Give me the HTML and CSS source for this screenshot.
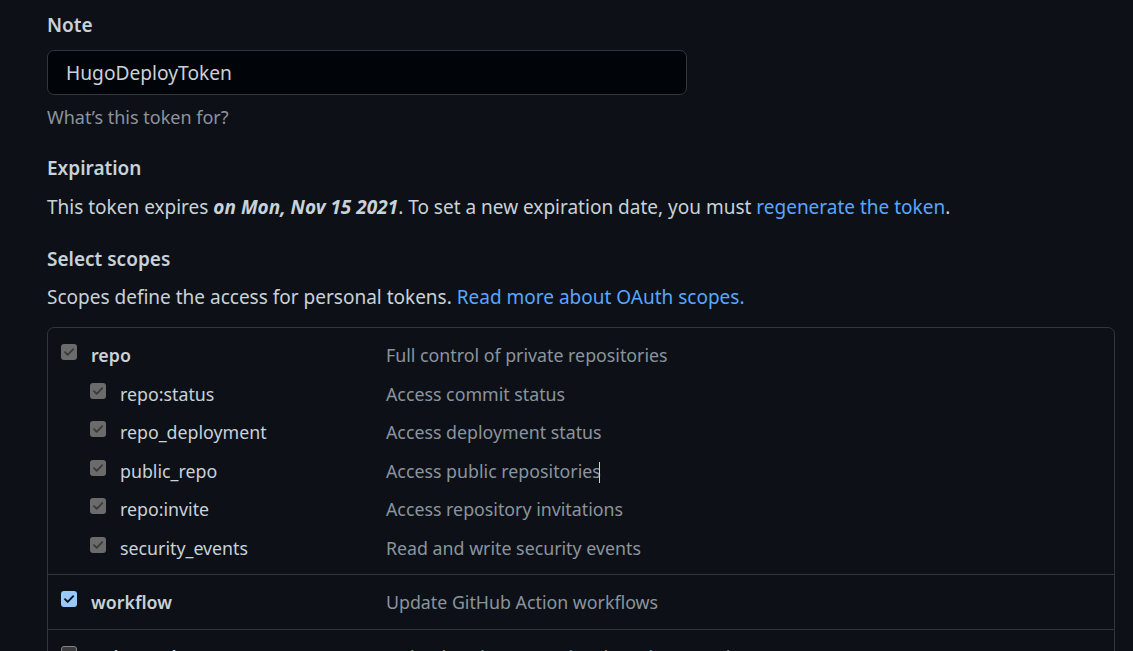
FILE: index.html
```html
<!DOCTYPE html>
<html lang="en">
<head>
<meta charset="utf-8">
<title>New personal access token</title>
<link rel="stylesheet" href="styles.css">
</head>
<body>
<div class="page">
  <div class="field">
    <label class="label" for="note">Note</label>
    <div class="input">HugoDeployToken</div>
    <p class="hint">What’s this token for?</p>
  </div>

  <div class="section expiration">
    <h3 class="label">Expiration</h3>
    <p class="text">This token expires <em class="date">on Mon, Nov 15 2021</em>. To set a new expiration date, you must <a class="link" href="#">regenerate the token</a>.</p>
  </div>

  <div class="section scopes">
    <h3 class="label">Select scopes</h3>
    <p class="text">Scopes define the access for personal tokens. <a class="link" href="#">Read more about OAuth scopes.</a></p>
  </div>

  <div class="scope-box">
    <div class="group">
      <div class="row">
        <span class="name main"><span class="cb cb-grey"><svg viewBox="0 0 16 16" width="16" height="16"><path d="M4 8.2l2.7 2.7L12.2 5.2" fill="none" stroke="#3a3a3a" stroke-width="1.8" stroke-linecap="round" stroke-linejoin="round"/></svg></span>repo</span>
        <span class="desc">Full control of private repositories</span>
      </div>
      <div class="row">
        <span class="name child"><span class="cb cb-grey"><svg viewBox="0 0 16 16" width="16" height="16"><path d="M4 8.2l2.7 2.7L12.2 5.2" fill="none" stroke="#3a3a3a" stroke-width="1.8" stroke-linecap="round" stroke-linejoin="round"/></svg></span>repo:status</span>
        <span class="desc">Access commit status</span>
      </div>
      <div class="row">
        <span class="name child"><span class="cb cb-grey"><svg viewBox="0 0 16 16" width="16" height="16"><path d="M4 8.2l2.7 2.7L12.2 5.2" fill="none" stroke="#3a3a3a" stroke-width="1.8" stroke-linecap="round" stroke-linejoin="round"/></svg></span>repo_deployment</span>
        <span class="desc">Access deployment status</span>
      </div>
      <div class="row">
        <span class="name child"><span class="cb cb-grey"><svg viewBox="0 0 16 16" width="16" height="16"><path d="M4 8.2l2.7 2.7L12.2 5.2" fill="none" stroke="#3a3a3a" stroke-width="1.8" stroke-linecap="round" stroke-linejoin="round"/></svg></span>public_repo</span>
        <span class="desc">Access public repositories<span class="caret"></span></span>
      </div>
      <div class="row">
        <span class="name child"><span class="cb cb-grey"><svg viewBox="0 0 16 16" width="16" height="16"><path d="M4 8.2l2.7 2.7L12.2 5.2" fill="none" stroke="#3a3a3a" stroke-width="1.8" stroke-linecap="round" stroke-linejoin="round"/></svg></span>repo:invite</span>
        <span class="desc">Access repository invitations</span>
      </div>
      <div class="row">
        <span class="name child"><span class="cb cb-grey"><svg viewBox="0 0 16 16" width="16" height="16"><path d="M4 8.2l2.7 2.7L12.2 5.2" fill="none" stroke="#3a3a3a" stroke-width="1.8" stroke-linecap="round" stroke-linejoin="round"/></svg></span>security_events</span>
        <span class="desc">Read and write security events</span>
      </div>
    </div>
    <div class="group">
      <div class="row">
        <span class="name main"><span class="cb cb-blue"><svg viewBox="0 0 16 16" width="16" height="16"><path d="M4 8.2l2.7 2.7L12.2 5.2" fill="none" stroke="#0d1117" stroke-width="1.9" stroke-linecap="round" stroke-linejoin="round"/></svg></span>workflow</span>
        <span class="desc">Update GitHub Action workflows</span>
      </div>
    </div>
    <div class="group">
      <div class="row">
        <span class="name main"><span class="cb cb-empty"></span>write:packages</span>
        <span class="desc">Upload packages to GitHub Package Registry</span>
      </div>
    </div>
  </div>
</div>
</body>
</html>
```

FILE: styles.css
```css
html, body {
  margin: 0;
  padding: 0;
  background: #0d1117;
  height: 100%;
  overflow: hidden;
}
body {
  font-family: "Segoe UI", "Noto Sans", "Open Sans", sans-serif;
  font-size: 19px;
  color: #c9d1d9;
}
.page {
  padding: 14px 18px 0 47px;
}
.label {
  display: block;
  margin: 0;
  font-size: 19px;
  font-weight: 600;
  line-height: 22px;
  color: #c9d1d9;
}
.input {
  margin-top: 14px;
  height: 43px;
  box-sizing: content-box;
  border: 1px solid #30363d;
  border-radius: 7px;
  background: #010409;
  padding: 0 0 0 18px;
  width: 620px;
  line-height: 43px;
  font-size: 19.2px;
  color: #c9d1d9;
}
.hint {
  margin: 12px 0 0;
  font-size: 18px;
  line-height: 20px;
  color: #8b949e;
}
.section { margin-top: 30px; }
.scopes { margin-top: 28px; }
.text {
  margin: 15px 0 0;
  line-height: 26px;
  font-size: 19px;
}
.scopes .text { margin-top: 14px; }
.date { font-weight: 700; font-style: italic; }
.link { color: #58a6ff; text-decoration: none; }

.scope-box {
  margin-top: 17px;
  width: 1066px;
  border: 1px solid #30363d;
  border-radius: 7px;
}
.group {
  padding: 8px 0 7px;
  border-top: 1px solid #30363d;
}
.group:first-child { border-top: 0; }
.row {
  display: grid;
  grid-template-columns: 338px 1fr;
  height: 38.5px;
  align-items: center;
  font-size: 17.8px;
}
.name {
  display: flex;
  align-items: center;
  color: #c9d1d9;
}
.name.main { padding-left: 13px; font-weight: 600; }
.name.child { padding-left: 42px; }
.desc { color: #8b949e; }
.cb {
  width: 16px;
  height: 16px;
  margin-right: 14px;
  border-radius: 3px;
  box-sizing: border-box;
  position: relative;
  top: -3px;
  flex: none;
}
.cb svg { display: block; }
.cb-grey { background: #6b6b6b; }
.cb-blue { background: #99c8ff; }
.cb-empty { background: #3b3b3b; border: 1px solid #858585; }
.caret {
  display: inline-block;
  width: 1px;
  height: 21px;
  margin-left: -2px;
  background: #c9d1d9;
  vertical-align: -5px;
}
```
